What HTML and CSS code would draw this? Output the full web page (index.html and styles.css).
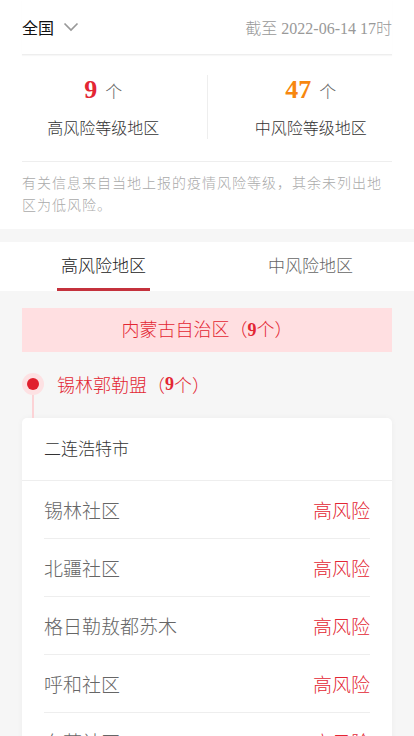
FILE: index.html
```html
<!DOCTYPE html>
<html>
<head>
    <meta charset="utf-8">
    <title>风险等级地区</title>
    <link rel="stylesheet" href="styles.css">
</head>
<body>
    <div class="ust">
        <div class="bas">
            <span class="bolge">全国
                <svg class="ok" width="16" height="10" viewBox="0 0 16 10"><path d="M1.5 1.5 L8 8 L14.5 1.5" fill="none" stroke="#999" stroke-width="1.7"/></svg>
            </span>
            <span class="tarih">截至 2022-06-14 17时</span>
        </div>
        <div class="sayilar">
            <div class="sayi">
                <div><b class="kirmizi">9</b> <span class="adet">个</span></div>
                <div class="etiket">高风险等级地区</div>
            </div>
            <div class="sayi">
                <div><b class="turuncu">47</b> <span class="adet">个</span></div>
                <div class="etiket">中风险等级地区</div>
            </div>
        </div>
        <p class="not">有关信息来自当地上报的疫情风险等级，其余未列出地区为低风险。</p>
    </div>

    <div class="sekmeler">
        <div class="sekme aktif">高风险地区</div>
        <div class="sekme">中风险地区</div>
    </div>

    <div class="liste">
        <div class="il">内蒙古自治区（<b>9</b>个）</div>
        <div class="sehir"><span class="nokta"></span>锡林郭勒盟（<b>9</b>个）</div>
        <div class="kart">
            <div class="kart-bas">二连浩特市</div>
            <div class="satirlar">
                <div class="satir"><span>锡林社区</span><span class="risk">高风险</span></div>
                <div class="satir"><span>北疆社区</span><span class="risk">高风险</span></div>
                <div class="satir"><span>格日勒敖都苏木</span><span class="risk">高风险</span></div>
                <div class="satir"><span>呼和社区</span><span class="risk">高风险</span></div>
                <div class="satir"><span>东苑社区</span><span class="risk">高风险</span></div>
            </div>
        </div>
    </div>
</body>
</html>
```

FILE: styles.css
```css
* {box-sizing: border-box;}
body {
    margin: 0;
    background-color: #f6f6f6;
    font-family: "Liberation Serif", "Noto Sans CJK SC", serif;
    font-weight: 300;
    color: #333;}
b {font-weight: 700;}

.ust {background-color: #fff; padding: 0 22px;}
.bas {
    height: 55px;
    display: flex;
    align-items: center;
    justify-content: space-between;
    border-bottom: 1px solid #eee;
    box-shadow: 0 1px 1px rgba(0,0,0,0.03);}
.bolge {font-size: 16px; color: #111; display: flex; align-items: center; font-weight: 400;}
.ok {margin-left: 9px;}
.tarih {font-size: 16px; color: #999;}

/* sayaçlar tam genişlikte, ayraç ekranın ortasında */
.sayilar {
    display: flex;
    margin: 0 -22px;
    padding: 20px 0 22px;}
.sayi {flex: 1; text-align: center;}
.sayi + .sayi {border-left: 1px solid #eee;}
.sayi b {font-size: 26px; line-height: 30px;}
.kirmizi {color: #e32633;}
.turuncu {color: #f7870f;}
.adet {font-size: 17px; color: #666; margin-left: 4px;}
.etiket {font-size: 16px; color: #333; margin-top: 10px;}

.not {
    margin: 0;
    padding: 11px 0 12px;
    border-top: 1px solid #eee;
    font-size: 14px;
    letter-spacing: 1px;
    line-height: 22px;
    color: #aaa;}

.sekmeler {
    display: flex;
    background-color: #fff;
    margin-top: 13px;
    height: 49px;}
.sekme {
    flex: 1;
    display: flex;
    justify-content: center;
    align-items: center;
    padding-bottom: 4px;
    font-size: 17px;
    color: #666;}
.sekme.aktif {color: #222; position: relative;}
.sekme.aktif::after {
    content: "";
    position: absolute;
    left: 57px;
    right: 57px;
    bottom: 0;
    height: 3px;
    background-color: #c4313c;}

.liste {padding: 17px 22px 0;}
.il {
    background-color: #ffdfe1;
    color: #e32633;
    font-size: 18px;
    height: 44px;
    line-height: 44px;
    text-align: center;}
.sehir {
    display: flex;
    align-items: center;
    height: 66px;
    padding-bottom: 2px;
    font-size: 18px;
    color: #e32633;
    position: relative;}
.nokta {
    width: 22px;
    height: 22px;
    border-radius: 50%;
    background-color: #fde1e3;
    margin-right: 13px;
    display: flex;
    justify-content: center;
    align-items: center;}
.nokta::after {
    content: "";
    width: 12px;
    height: 12px;
    border-radius: 50%;
    background-color: #e0202e;}
.sehir::after {
    content: "";
    position: absolute;
    left: 10px;
    top: 43px;
    bottom: 0;
    width: 1.5px;
    background-color: #fcd3d6;}

.kart {
    background-color: #fff;
    border-radius: 5px;
    box-shadow: 0 0 6px rgba(0,0,0,0.04);}
.kart-bas {
    height: 63px;
    line-height: 63px;
    padding: 0 22px 0;
    font-size: 17px;
    color: #333;
    border-bottom: 1px solid #eee;}
.satirlar {padding: 0 22px;}
.satir {
    display: flex;
    justify-content: space-between;
    align-items: center;
    height: 58px;
    font-size: 19px;
    color: #666;
    border-bottom: 1px solid #eee;}
.risk {color: #e32633;}
```
